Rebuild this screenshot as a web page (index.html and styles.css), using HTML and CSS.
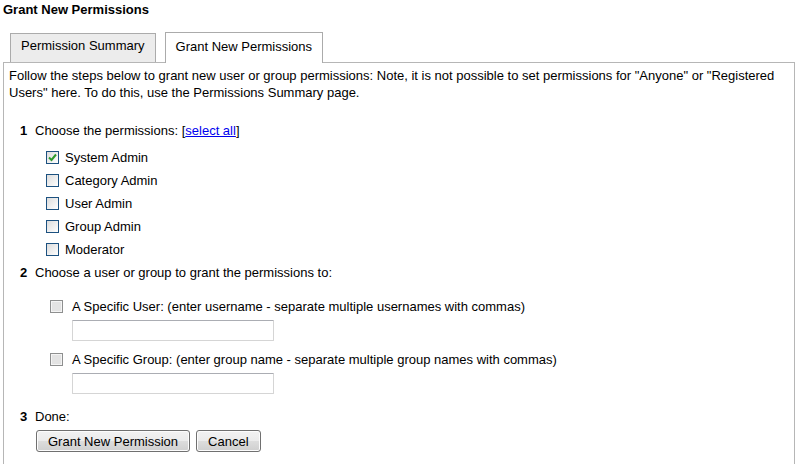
FILE: index.html
```html
<!DOCTYPE html>
<html>
<head>
<meta charset="utf-8">
<link rel="stylesheet" href="styles.css">
</head>
<body>
<h1 class="title">Grant New Permissions</h1>
<div class="tabs">
  <div class="tab">Permission Summary</div>
  <div class="tab active">Grant New Permissions</div>
</div>
<div class="panel">
  <p class="intro">Follow the steps below to grant new user or group permissions: Note, it is not possible to set permissions for "Anyone" or "Registered Users" here. To do this, use the Permissions Summary page.</p>

  <div class="step step1"><span class="num">1</span>Choose the permissions: [<a href="#" class="link">select all</a>]</div>
  <div class="perm-list">
    <div class="perm"><span class="cb checked"><svg width="11" height="11" viewBox="0 0 11 11"><path d="M2 5.5 L4.5 8 L9 2.5" fill="none" stroke="#2d9a2d" stroke-width="2"/></svg></span>System Admin</div>
    <div class="perm"><span class="cb"></span>Category Admin</div>
    <div class="perm"><span class="cb"></span>User Admin</div>
    <div class="perm"><span class="cb"></span>Group Admin</div>
    <div class="perm"><span class="cb"></span>Moderator</div>
  </div>

  <div class="step step2"><span class="num">2</span>Choose a user or group to grant the permissions to:</div>
  <div class="target first"><span class="cb grey"></span>A Specific User: (enter username - separate multiple usernames with commas)</div>
  <div class="field"><input type="text" class="textbox"></div>
  <div class="target"><span class="cb grey"></span>A Specific Group: (enter group name - separate multiple group names with commas)</div>
  <div class="field"><input type="text" class="textbox"></div>

  <div class="step step3"><span class="num">3</span>Done:</div>
  <div class="buttons">
    <button class="btn">Grant New Permission</button>
    <button class="btn">Cancel</button>
  </div>
</div>
</body>
</html>
```
FILE: styles.css
```css
html, body {
  margin: 0;
  padding: 0;
  background: #ffffff;
}
body {
  font-family: "Liberation Sans", Arial, sans-serif;
  font-size: 13px;
  color: #000;
  width: 796px;
  height: 464px;
  overflow: hidden;
}
.title {
  margin: 0;
  padding: 2px 0 0 3px;
  font-size: 13px;
  line-height: 15px;
  font-weight: bold;
}
.tabs {
  display: flex;
  gap: 9px;
  padding-left: 10px;
  margin-top: 15px;
  align-items: flex-end;
}
.tab {
  height: 24px;
  padding: 4px 10px 0 10px;
  line-height: 15px;
  border: 1px solid #ababab;
  border-bottom: none;
  background: #ececec;
}
.tab.active {
  background: #fff;
  height: 24px;
  padding-top: 6px;
  margin-bottom: -1px;
  position: relative;
  z-index: 1;
}
.panel {
  box-sizing: border-box;
  margin: 0 1px 0 3px;
  border: 1px solid #b6b6b6;
  padding: 4px 5px 0 5px;
  line-height: 17px;
  height: 403px;
}
.intro {
  margin: 0;
}
.step {
  display: flex;
  padding-left: 11px;
}
.num {
  font-weight: bold;
  width: 15px;
}
.step1 { margin-top: 21px; }
.step2 { margin-top: 3px; }
.step3 { margin-top: 14px; }
.link {
  color: #0000ee;
  text-decoration: underline;
}
.perm-list {
  margin-top: 7px;
  padding-left: 37px;
}
.perm {
  height: 23px;
  display: flex;
  align-items: center;
  gap: 6px;
}
.cb {
  box-sizing: border-box;
  width: 13px;
  height: 13px;
  border: 1px solid #1c5180;
  background: linear-gradient(135deg, #dcdcdc 0%, #f4f4f4 70%, #ffffff 100%);
  display: inline-flex;
  align-items: center;
  justify-content: center;
  flex: none;
}
.cb svg { display: block; }
.cb.grey {
  border: 1px solid #8e8f8f;
  background: #e3e3e3;
  box-shadow: inset 0 0 0 1px #f4f4f4;
}
.target {
  display: flex;
  align-items: center;
  gap: 9px;
  padding-left: 41px;
  margin-top: 10px;
}
.target.first {
  margin-top: 17px;
}
.field {
  margin-top: 5px;
  padding-left: 63px;
  display: flex;
}
.textbox {
  box-sizing: border-box;
  width: 202px;
  height: 21px;
  margin: 0;
  border: 1px solid #d5d5d5;
  border-top-color: #abadb3;
  border-radius: 1px;
  background: #fff;
  padding: 0 3px;
  font-family: "Liberation Sans", Arial, sans-serif;
  font-size: 13px;
}
.buttons {
  display: flex;
  gap: 6px;
  padding-left: 27px;
  margin-top: 5px;
}
.btn {
  box-sizing: border-box;
  height: 22px;
  margin: 0;
  padding: 0 11px;
  font-family: "Liberation Sans", Arial, sans-serif;
  font-size: 13px;
  color: #000;
  border: 1px solid #707070;
  border-radius: 3px;
  background: linear-gradient(#f2f2f2 0%, #ebebeb 50%, #dddddd 51%, #cfcfcf 100%);
  box-shadow: inset 0 0 0 1px #fcfcfc;
}
```
